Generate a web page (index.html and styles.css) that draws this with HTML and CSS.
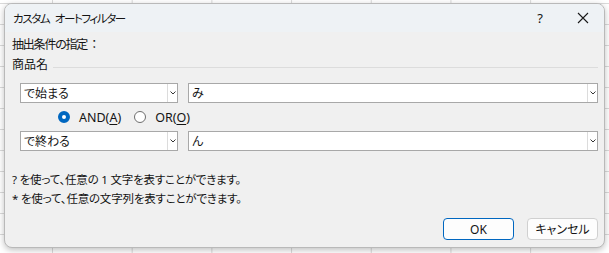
FILE: index.html
```html
<!DOCTYPE html>
<html lang="ja">
<head>
    <meta charset="UTF-8">
    <meta name="viewport" content="width=device-width, initial-scale=1.0">
    <title>カスタム オートフィルター</title>
    <link rel="stylesheet" href="styles.css">
</head>
<body>
    <div class="dialog">
        <div class="titlebar">
            <span class="title">カスタム オートフィルター</span>
            <span class="help">?</span>
            <span class="close">
                <svg width="12" height="12" viewBox="0 0 12 12"><path d="M1 1L11 11M11 1L1 11" stroke="#1a1a1a" stroke-width="1.1" fill="none"/></svg>
            </span>
        </div>
        <div class="content">
            <div class="label">抽出条件の指定<span class="colon">：</span></div>
            <div class="group">
                <span>商品名</span>
                <div class="group-line"></div>
            </div>

            <div class="row">
                <div class="combo op">
                    <span class="value">で始まる</span>
                    <span class="arrow"><svg width="6" height="4" viewBox="0 0 6 4"><path d="M0.5 0.5L3 3L5.5 0.5" stroke="#333" stroke-width="1" fill="none"/></svg></span>
                </div>
                <div class="combo val">
                    <span class="value">み</span>
                    <span class="arrow"><svg width="6" height="4" viewBox="0 0 6 4"><path d="M0.5 0.5L3 3L5.5 0.5" stroke="#333" stroke-width="1" fill="none"/></svg></span>
                </div>
            </div>

            <div class="radios">
                <label class="radio checked"><span class="dot"></span>AND(<u>A</u>)</label>
                <label class="radio"><span class="dot"></span>OR(<u>O</u>)</label>
            </div>

            <div class="row">
                <div class="combo op">
                    <span class="value">で終わる</span>
                    <span class="arrow"><svg width="6" height="4" viewBox="0 0 6 4"><path d="M0.5 0.5L3 3L5.5 0.5" stroke="#333" stroke-width="1" fill="none"/></svg></span>
                </div>
                <div class="combo val">
                    <span class="value">ん</span>
                    <span class="arrow"><svg width="6" height="4" viewBox="0 0 6 4"><path d="M0.5 0.5L3 3L5.5 0.5" stroke="#333" stroke-width="1" fill="none"/></svg></span>
                </div>
            </div>

            <div class="hint">
                <div>? を使って、任意の 1 文字を表すことができます。</div>
                <div>* を使って、任意の文字列を表すことができます。</div>
            </div>

            <div class="buttons">
                <button class="btn primary">OK</button>
                <button class="btn">キャンセル</button>
            </div>
        </div>
    </div>
</body>
</html>
```

FILE: styles.css
```css
html, body{
    margin: 0;
    height: 253px;
    overflow: hidden;
}
body{
    background-color: #fff;
    background-image:
        linear-gradient(to right, #dadada 1px, transparent 1px),
        linear-gradient(to bottom, #dadada 1px, transparent 1px);
    background-size: 79.7px 21px;
    background-position: 52px 3px;
    font-family: "Noto Sans", "Noto Sans CJK JP", sans-serif;
    font-size: 12px;
    font-feature-settings: "palt";
    color: #141414;
    padding-top: 3px;
}
.dialog{
    margin-left: 4px;
    width: 601px;
    height: 245px;
    box-sizing: border-box;
    border: 1px solid #b9b9b9;
    border-radius: 8px;
    background: #f0f0f0;
    box-shadow: 0 2px 6px rgba(0,0,0,0.25);
    overflow: hidden;
}
.titlebar{
    height: 28px;
    background: #eef2f5;
    display: flex;
    align-items: center;
    padding-left: 8px;
}
.title{
    flex: 1;
    font-size: 11.5px;
    letter-spacing: -1.4px;
    word-spacing: 4px;
}
.help{
    width: 20px;
    text-align: center;
    font-size: 13px;
    margin-right: 27px;
}
.close{
    width: 12px;
    height: 12px;
    margin-right: 15px;
    display: flex;
}
.content{
    padding: 3px 6px 0 7px;
}
.label{
    line-height: 20px;
    letter-spacing: -1.2px;
}
.colon{
    margin-left: 4px;
}
.group{
    display: flex;
    align-items: center;
    line-height: 20px;
}
.group-line{
    flex: 1;
    height: 1px;
    background: #dcdcdc;
    margin: 4px 0 0 5px;
}
.row{
    display: flex;
    gap: 10px;
    margin: 8px 0 0 8px;
}
.radios + .row{
    margin-top: 0;
}
.combo{
    height: 20px;
    box-sizing: border-box;
    border: 1px solid #a8a8a8;
    background: #fff;
    display: flex;
    align-items: center;
}
.combo.op{
    width: 158px;
}
.combo.val{
    width: 410px;
}
.value{
    flex: 1;
    padding-left: 3px;
}
.arrow{
    width: 9px;
    height: 18px;
    border-left: 1px solid #dcdcdc;
    display: flex;
    align-items: center;
    justify-content: center;
}
.radios{
    height: 28px;
    display: flex;
    align-items: center;
    padding-left: 46px;
    gap: 13px;
}
.radio{
    display: flex;
    align-items: center;
    font-size: 12.5px;
}
.radio u{
    text-underline-offset: 2px;
}
.dot{
    width: 10px;
    height: 10px;
    border: 1px solid #6e6e6e;
    border-radius: 50%;
    margin-right: 9px;
    background: #fff;
}
.radio.checked .dot{
    width: 4px;
    height: 4px;
    border: 4px solid #0067c0;
    background: #fff;
}
.hint{
    margin-top: 19px;
    line-height: 19px;
    font-size: 11.5px;
    letter-spacing: -0.2px;
}
.buttons{
    display: flex;
    justify-content: flex-end;
    gap: 13px;
    margin-top: 10px;
}
.btn{
    width: 71px;
    height: 22px;
    box-sizing: border-box;
    border: 1px solid #d0d0d0;
    border-radius: 4px;
    background: #fdfdfd;
    font-family: "Noto Sans", "Noto Sans CJK JP", sans-serif;
    font-size: 12px;
    font-feature-settings: "palt";
    color: #141414;
    padding: 0;
}
.btn.primary{
    border-color: #0067c0;
}
```
